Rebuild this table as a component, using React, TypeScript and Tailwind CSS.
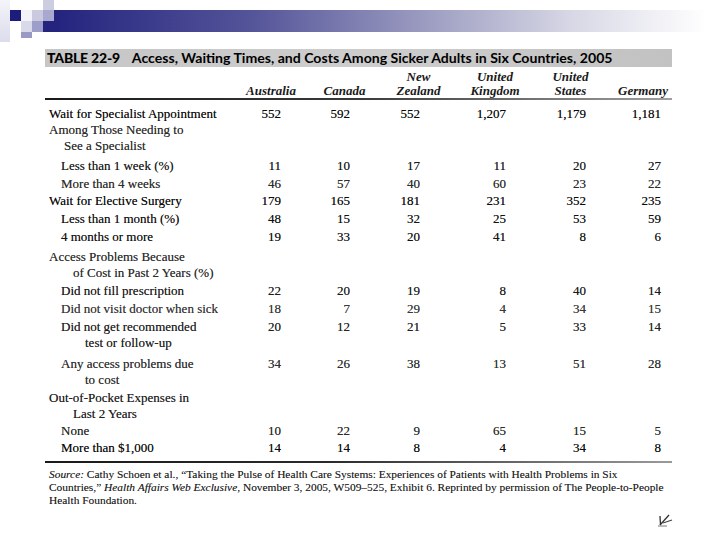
import React from "react";

const HEAD = [
  ["", "Australia"],
  ["", "Canada"],
  ["New", "Zealand"],
  ["United", "Kingdom"],
  ["United", "States"],
  ["", "Germany"],
];

type Row = {
  lines: string[];
  pad: string;
  sub?: string;
  vals?: string[];
  mt: string;
  tone: string;
};

const ROWS: Row[] = [
  { lines: ["Wait for Specialist Appointment"], pad: "pl-0", vals: ["552", "592", "552", "1,207", "1,179", "1,181"], mt: "mt-0", tone: "text-[#0a0a0a]" },
  { lines: ["Among Those Needing to", "See a Specialist"], pad: "pl-0", sub: "pl-[15px]", mt: "mt-0", tone: "text-[#2e2e2e]" },
  { lines: ["Less than 1 week (%)"], pad: "pl-3", vals: ["11", "10", "17", "11", "20", "27"], mt: "mt-[4px]", tone: "text-[#1a1a1a]" },
  { lines: ["More than 4 weeks"], pad: "pl-3", vals: ["46", "57", "40", "60", "23", "22"], mt: "mt-[2px]", tone: "text-[#2e2e2e]" },
  { lines: ["Wait for Elective Surgery"], pad: "pl-0", vals: ["179", "165", "181", "231", "352", "235"], mt: "mt-[1px]", tone: "text-[#0a0a0a]" },
  { lines: ["Less than 1 month (%)"], pad: "pl-3", vals: ["48", "15", "32", "25", "53", "59"], mt: "mt-[2px]", tone: "text-[#111]" },
  { lines: ["4 months or more"], pad: "pl-3", vals: ["19", "33", "20", "41", "8", "6"], mt: "mt-[2px]", tone: "text-[#111]" },
  { lines: ["Access Problems Because", "of Cost in Past 2 Years (%)"], pad: "pl-0", sub: "pl-6", mt: "mt-[4px]", tone: "text-[#2e2e2e]" },
  { lines: ["Did not fill prescription"], pad: "pl-3", vals: ["22", "20", "19", "8", "40", "14"], mt: "mt-[2px]", tone: "text-[#1a1a1a]" },
  { lines: ["Did not visit doctor when sick"], pad: "pl-3", vals: ["18", "7", "29", "4", "34", "15"], mt: "mt-[2px]", tone: "text-[#383838]" },
  { lines: ["Did not get recommended", "test or follow-up"], pad: "pl-3", sub: "pl-6", vals: ["20", "12", "21", "5", "33", "14"], mt: "mt-[2px]", tone: "text-[#222]" },
  { lines: ["Any access problems due", "to cost"], pad: "pl-3", sub: "pl-6", vals: ["34", "26", "38", "13", "51", "28"], mt: "mt-[5px]", tone: "text-[#2e2e2e]" },
  { lines: ["Out-of-Pocket Expenses in", "Last 2 Years"], pad: "pl-0", sub: "pl-6", mt: "mt-[2px]", tone: "text-[#222]" },
  { lines: ["None"], pad: "pl-3", vals: ["10", "22", "9", "65", "15", "5"], mt: "mt-[1px]", tone: "text-[#2a2a2a]" },
  { lines: ["More than $1,000"], pad: "pl-3", vals: ["14", "14", "8", "4", "34", "8"], mt: "mt-[1px]", tone: "text-[#0a0a0a]" },
];

function Logo() {
  return (
    <svg width="55" height="45" viewBox="0 0 55 45" className="shrink-0">
      <defs>
        <linearGradient id="lg" x1="0" y1="0" x2="0" y2="1">
          <stop offset="0" stopColor="#f4f4fa" />
          <stop offset="1" stopColor="#dcdcec" />
        </linearGradient>
      </defs>
      <rect x="0" y="0" width="10" height="42" fill="url(#lg)" />
      <rect x="10" y="10" width="11" height="11" fill="#1c1c7c" />
      <rect x="21" y="10" width="11" height="11" fill="#f2f2f8" />
      <rect x="32" y="10" width="11" height="11" fill="#c9c9e0" />
      <rect x="43" y="0" width="11" height="10" fill="#cdcde2" />
      <rect x="43" y="10" width="12" height="22" fill="#24247f" />
      <rect x="43" y="10" width="11" height="11" fill="#a9a9d0" />
      <rect x="21" y="21" width="11" height="11" fill="#d9d9ea" />
      <rect x="32" y="21" width="11" height="11" fill="#9e9ecb" />
      <rect x="21" y="32" width="11" height="6" fill="#9999c6" />
    </svg>
  );
}

function Mark() {
  return (
    <svg width="20" height="16" viewBox="0 0 20 16">
      <path d="M4 4 L4.5 13" stroke="#333" strokeWidth="1.3" fill="none" />
      <path d="M4 13 L13 3" stroke="#333" strokeWidth="1.3" fill="none" />
      <path d="M7 11 L16 8" stroke="#444" strokeWidth="1.1" fill="none" />
      <path d="M2 14 L11 14" stroke="#555" strokeWidth="0.8" fill="none" />
    </svg>
  );
}

export default function App() {
  return (
    <div className="w-[720px] h-[540px] overflow-hidden bg-white font-['Liberation_Serif',serif] text-[#1a1a1a]">
      <div className="flex h-[45px]">
        <Logo />
        <div className="mt-[10px] h-[22px] flex-1 bg-[linear-gradient(90deg,#24247f_0%,#55559a_30%,#9a9ac0_55%,#d8d8e6_78%,#ffffff_98%)]" />
      </div>

      <div className="mt-[4px] ml-[45px] flex h-[18px] w-[627px] items-center bg-[linear-gradient(90deg,#c6c6c6,#cdcdcd_50%,#c2c2c2)] pl-[2px] font-['Lato',sans-serif] leading-none text-black">
        <span className="text-[14px] font-black tracking-[-0.2px]">TABLE 22-9</span>
        <span className="ml-[12px] text-[14.1px] font-bold">
          Access, Waiting Times, and Costs Among Sicker Adults in Six Countries, 2005
        </span>
      </div>

      <div className="ml-[45px] w-[627px]">
        <div className="mt-[3px] grid grid-cols-[185px_74px_73px_75px_78px_73px_72px] pl-1 text-[13px] leading-[14px] font-bold italic text-[#1a1a1a]">
          <div />
          {HEAD.map(([a, b]) => (
            <div key={b} className="text-center">
              <div className="h-[14px]">{a}</div>
              <div>{b}</div>
            </div>
          ))}
        </div>
        <div className="h-[2px] bg-[linear-gradient(90deg,#1a1a1a,#3a3a3a_50%,#a0a0a0)]" />

        <div className="pt-[6px] pl-1 text-[13px] leading-[16px] [text-shadow:0_0_0.6px_rgba(0,0,0,0.55)]">
          {ROWS.map((r, i) => (
            <div
              key={i}
              className={`grid grid-cols-[173px_59px_69px_70px_86px_80px_75px] ${r.mt} ${r.tone}`}
            >
              <div className={r.pad}>
                <div className="whitespace-nowrap">{r.lines[0]}</div>
                {r.lines[1] && (
                  <div className={`whitespace-nowrap ${r.sub}`}>{r.lines[1]}</div>
                )}
              </div>
              {(r.vals ?? ["", "", "", "", "", ""]).map((v, j) => (
                <div key={j} className="text-right">
                  {v}
                </div>
              ))}
            </div>
          ))}
        </div>

        <div className="mt-[5px] h-[2px] bg-[linear-gradient(90deg,#1a1a1a,#2a2a2a_45%,#9a9a9a)]" />

        <p className="mt-[5px] pl-1 text-[11.4px] leading-[13px] text-[#1e1e1e] whitespace-nowrap [text-shadow:0_0_0.5px_rgba(0,0,0,0.4)]">
          <i>Source:</i> Cathy Schoen et al., “Taking the Pulse of Health Care Systems: Experiences of Patients with Health Problems in Six
          <br />
          Countries,” <i>Health Affairs Web Exclusive</i>, November 3, 2005, W509–525, Exhibit 6. Reprinted by permission of The People-to-People
          <br />
          Health Foundation.
        </p>
      </div>

      <div className="mt-[5px] pl-[656px]">
        <Mark />
      </div>
    </div>
  );
}
